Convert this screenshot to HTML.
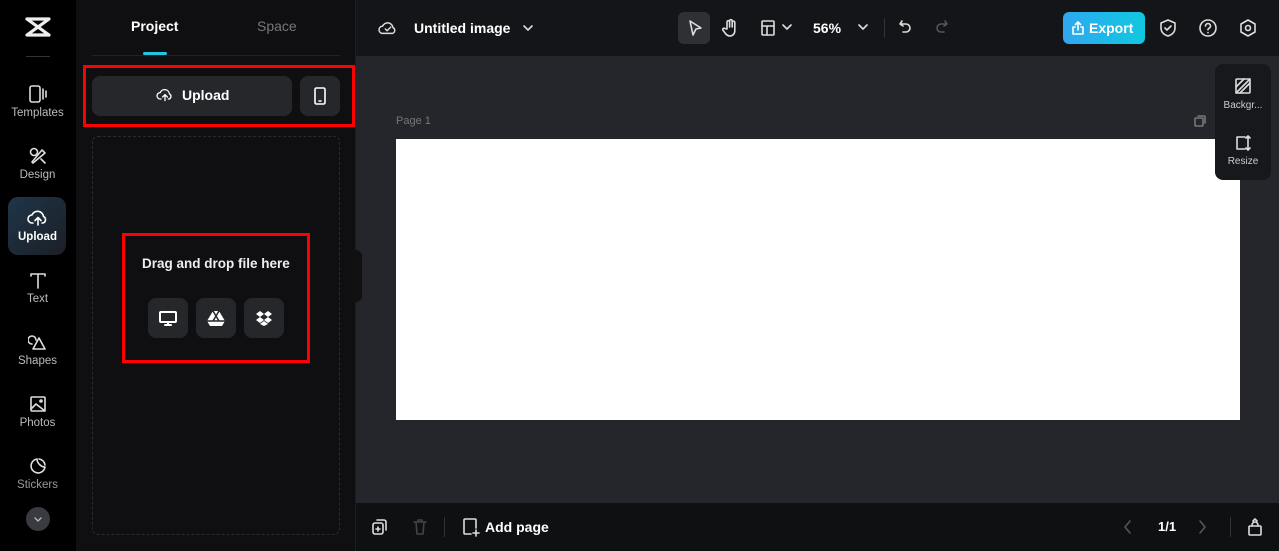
<!DOCTYPE html>
<html><head><meta charset="utf-8"><style>
*{box-sizing:border-box;margin:0;padding:0}
body{width:1279px;height:551px;overflow:hidden;background:#25262b;font-family:"Liberation Sans",sans-serif;position:relative;color:#fff}
.abs{position:absolute}
.rail{left:0;top:0;width:76px;height:551px;background:#000}
.ri{position:absolute;left:0;width:75px;text-align:center;font-size:11.5px;color:#bbb}
.ri svg{display:block;margin:0 auto 3px}
.panel{left:76px;top:0;width:280px;height:551px;background:#0f0f11;border-right:1px solid #1d1e22}
.top{left:356px;top:0;width:923px;height:56px;background:#141518}
.bot{left:356px;top:503px;width:923px;height:48px;background:#0f1012}
.btn{position:absolute;background:#26272b;border-radius:8px}
svg{fill:none;stroke:#ddd;stroke-width:1.6;stroke-linecap:round;stroke-linejoin:round}
</style></head><body>
<div class="abs rail">
 <svg class="abs" style="left:24px;top:16px" width="28" height="22" viewBox="0 0 28 22"><path d="M3 3h22L3 19h22M3 3l22 16" stroke="#eee" stroke-width="3.2"/></svg>
 <div class="abs" style="left:26px;top:56px;width:24px;height:1px;background:#333"></div>
 <div class="ri" style="top:84px"><svg width="20" height="20" viewBox="0 0 20 20"><rect x="2" y="2" width="10" height="16" rx="2"/><path d="M15 5v10M18 7v6"/></svg>Templates</div>
 <div class="ri" style="top:146px"><svg width="20" height="20" viewBox="0 0 20 20"><circle cx="6" cy="6" r="3.5"/><path d="M4 16l10-12 3 3-12 10zM13 13l4 4"/></svg>Design</div>
 <div class="abs" style="left:8px;top:197px;width:58px;height:58px;border-radius:10px;background:linear-gradient(135deg,#1e3548,#1c1f26)"></div>
 <div class="ri" style="top:208px;color:#fff;font-weight:bold"><svg width="22" height="20" viewBox="0 0 22 20" style="stroke:#fff"><path d="M6 15H5a4 4 0 010-8 6 6 0 0111.5 1.5A3.5 3.5 0 0116 15h-1M11 17V10M8 12.5l3-3 3 3"/></svg>Upload</div>
 <div class="ri" style="top:270px"><svg width="20" height="20" viewBox="0 0 20 20"><path d="M3 4h14M10 4v14M3 4v2M17 4v2"/></svg>Text</div>
 <div class="ri" style="top:332px"><svg width="20" height="20" viewBox="0 0 20 20"><path d="M8 8a4 4 0 10-4 4M11 6l6 11H5z"/></svg>Shapes</div>
 <div class="ri" style="top:394px"><svg width="20" height="20" viewBox="0 0 20 20"><rect x="3" y="3" width="14" height="14" rx="1"/><path d="M3 15l5-5 9 7"/><circle cx="13" cy="7" r="1"/></svg>Photos</div>
 <div class="ri" style="top:456px;color:#999"><svg width="20" height="20" viewBox="0 0 20 20"><path d="M17 11A7 7 0 119 3c0 4 4 8 8 8zM11 3a7 7 0 016 6"/></svg>Stickers</div>
 <div class="abs" style="left:26px;top:507px;width:24px;height:24px;border-radius:50%;background:#3a3b40"><svg width="24" height="24" viewBox="0 0 24 24"><path d="M9 11l3 3 3-3" stroke="#bbb" stroke-width="1.3"/></svg></div>
</div>
<div class="abs panel">
 <div class="abs" style="left:55px;top:18px;font-size:14px;font-weight:bold">Project</div>
 <div class="abs" style="left:181px;top:18px;font-size:14px;color:#777">Space</div>
 <div class="abs" style="left:67px;top:52px;width:24px;height:3px;border-radius:2px;background:#1fc6e0"></div>
 <div class="abs" style="left:16px;top:55px;width:248px;height:1px;background:#222"></div>
 <div class="btn" style="left:16px;top:76px;width:200px;height:40px"><div style="position:absolute;left:64px;top:11px;font-size:14px;font-weight:bold;display:flex;align-items:center;gap:8px"><svg width="18" height="16" viewBox="0 0 22 20" style="stroke:#fff"><path d="M6 15H5a4 4 0 010-8 6 6 0 0111.5 1.5A3.5 3.5 0 0116 15h-1M11 17V10M8 12.5l3-3 3 3"/></svg>Upload</div></div>
 <div class="btn" style="left:224px;top:76px;width:40px;height:40px"><svg style="position:absolute;left:12px;top:10px" width="16" height="20" viewBox="0 0 16 20"><rect x="3" y="2" width="10" height="16" rx="1.5" stroke="#fff"/><path d="M7 15h2" stroke="#fff"/></svg></div>
 <div class="abs" style="left:7px;top:65px;width:272px;height:62px;border:3px solid #f00"></div>
 <div class="abs" style="left:16px;top:136px;width:248px;height:399px;border:1px dashed #2a2b2f;border-radius:6px"></div>
 <div class="abs" style="left:66px;top:256px;font-size:13.5px;font-weight:bold;color:#eee">Drag and drop file here</div>
 <div class="btn" style="left:72px;top:298px;width:40px;height:40px"><svg style="position:absolute;left:10px;top:10px" width="20" height="20" viewBox="0 0 20 20"><rect x="2" y="4" width="16" height="10" rx="1" stroke="#fff" stroke-width="2"/><path d="M7 17h6M10 14v3" stroke="#fff" stroke-width="2"/></svg></div>
 <div class="btn" style="left:120px;top:298px;width:40px;height:40px"><svg style="position:absolute;left:10px;top:10px" width="20" height="20" viewBox="0 0 20 20"><path d="M7 3h6l6 10-3 5H4l-3-5z" fill="#fff" stroke="none"/><path d="M7 3l6 10M13 3L7 13M1 13h18" stroke="#26272b" stroke-width="1.5"/></svg></div>
 <div class="btn" style="left:168px;top:298px;width:40px;height:40px"><svg style="position:absolute;left:10px;top:10px" width="20" height="20" viewBox="0 0 20 20" style="stroke:none"><path d="M6 3l4 3-4 3-4-3zM14 3l4 3-4 3-4-3zM6 9l4 3-4 3-4-3zM14 9l4 3-4 3-4-3zM10 13l4 3-4 2-4-2z" fill="#fff" stroke="none"/></svg></div>
 <div class="abs" style="left:46px;top:233px;width:188px;height:130px;border:3px solid #f00"></div>
</div>
<div class="abs" style="left:352px;top:250px;width:10px;height:52px;background:#111;border-radius:0 6px 6px 0"></div>
<div class="abs top">
 <svg class="abs" style="left:22px;top:19px" width="20" height="18" viewBox="0 0 22 20"><path d="M6 16H5a4 4 0 010-8 6 6 0 0111.5 1.5A3.5 3.5 0 0116 16H6M8 11l2 2 4-4"/></svg>
 <div class="abs" style="left:58px;top:20px;font-size:14px;font-weight:bold">Untitled image</div>
 <svg class="abs" style="left:166px;top:22px" width="12" height="12" viewBox="0 0 12 12"><path d="M2 4l4 4 4-4"/></svg>
 <div class="abs" style="left:322px;top:12px;width:32px;height:32px;background:#2f3036;border-radius:6px"><svg style="position:absolute;left:8px;top:7px" width="18" height="18" viewBox="0 0 18 18"><path d="M4 2l11 7-5 1-3 6z"/></svg></div>
 <svg class="abs" style="left:364px;top:18px" width="20" height="20" viewBox="0 0 20 20"><path d="M7 11V4a1.3 1.3 0 012.6 0v5V3a1.3 1.3 0 012.6 0v6V4.5a1.3 1.3 0 012.6 0V13a5 5 0 01-5 5c-2 0-3-1-4-2l-3-4a1.3 1.3 0 012-1.5z"/></svg>
 <svg class="abs" style="left:403px;top:19px" width="18" height="18" viewBox="0 0 18 18"><rect x="3" y="2" width="12" height="14" rx="1"/><path d="M3 7h12M8 7v9"/></svg>
 <svg class="abs" style="left:426px;top:22px" width="10" height="10" viewBox="0 0 10 10"><path d="M1 3l4 4 4-4"/></svg>
 <div class="abs" style="left:457px;top:20px;font-size:14px;font-weight:bold">56%</div>
 <svg class="abs" style="left:502px;top:22px" width="10" height="10" viewBox="0 0 10 10"><path d="M1 3l4 4 4-4"/></svg>
 <div class="abs" style="left:528px;top:18px;width:1px;height:20px;background:#333"></div>
 <svg class="abs" style="left:541px;top:18px" width="18" height="18" viewBox="0 0 18 18"><path d="M5 3L3 6l3 2M3 6h6a4 4 0 010 8H6"/></svg>
 <svg class="abs" style="left:576px;top:18px" width="18" height="18" viewBox="0 0 18 18" style="stroke:#555"><path d="M13 3l2 3-3 2M15 6H9a4 4 0 000 8h3" stroke="#555"/></svg>
 <div class="abs" style="left:707px;top:12px;width:82px;height:32px;border-radius:6px;background:linear-gradient(90deg,#2fa8f0,#10c8e0)"><div style="position:absolute;left:9px;top:8px;font-size:14px;font-weight:bold;display:flex;gap:5px;align-items:center"><svg width="12" height="14" viewBox="0 0 12 14" style="stroke:#fff"><path d="M3 6H1v7h10V6H9M6 9V1M3.5 3.5L6 1l2.5 2.5"/></svg>Export</div></div>
 <svg class="abs" style="left:802px;top:18px" width="20" height="20" viewBox="0 0 20 20"><path d="M10 2l7 3v5c0 4-3 7-7 8-4-1-7-4-7-8V5z M7 10l2 2 4-4"/></svg>
 <svg class="abs" style="left:842px;top:18px" width="20" height="20" viewBox="0 0 20 20"><circle cx="10" cy="10" r="8"/><path d="M7.5 8a2.5 2.5 0 113.5 2.3c-.7.3-1 .8-1 1.5M10 14.5v.2"/></svg>
 <svg class="abs" style="left:882px;top:18px" width="20" height="20" viewBox="0 0 20 20"><path d="M10 2l7 4v8l-7 4-7-4V6z"/><circle cx="10" cy="10" r="2.5"/></svg>
</div>
<div class="abs" style="left:396px;top:115px;font-size:11px;color:#777">Page 1</div>
<svg class="abs" style="left:1193px;top:114px" width="14" height="14" viewBox="0 0 14 14" style="stroke:#777"><rect x="2" y="4" width="8" height="8" rx="1" stroke="#777"/><path d="M5 2h6a1 1 0 011 1v6" stroke="#777"/></svg>
<div class="abs" style="left:396px;top:139px;width:844px;height:281px;background:#fff"></div>
<div class="abs" style="left:1215px;top:64px;width:56px;height:116px;background:#17181c;border-radius:8px">
 <svg style="position:absolute;left:19px;top:13px" width="18" height="18" viewBox="0 0 18 18"><rect x="2" y="2" width="14" height="14" rx="1"/><path d="M2 10l8-8M6 16L16 6M2 16L16 2"/></svg>
 <div style="position:absolute;left:0;width:56px;top:36px;text-align:center;font-size:10px;color:#ccc">Backgr...</div>
 <svg style="position:absolute;left:19px;top:70px" width="18" height="18" viewBox="0 0 18 18"><path d="M3 3h8M3 3v12h8M14 2v14M12 4l2-2 2 2M12 14l2 2 2-2"/></svg>
 <div style="position:absolute;left:0;width:56px;top:92px;text-align:center;font-size:10px;color:#ccc">Resize</div>
</div>
<div class="abs bot">
 <svg class="abs" style="left:15px;top:15px" width="18" height="18" viewBox="0 0 18 18"><rect x="2" y="5" width="10" height="11" rx="2"/><path d="M6 2h7a2 2 0 012 2v8M7 9v4M5 11h4"/></svg>
 <svg class="abs" style="left:55px;top:15px" width="18" height="18" viewBox="0 0 18 18"><path d="M3 4h12M5 4l1 12h6l1-12M7 4V2h4v2" stroke="#444"/></svg>
 <div class="abs" style="left:88px;top:14px;width:1px;height:20px;background:#333"></div>
 <svg class="abs" style="left:105px;top:14px" width="20" height="20" viewBox="0 0 20 20"><path d="M10 17H4a1 1 0 01-1-1V3a1 1 0 011-1h10a1 1 0 011 1v8M15 13v6M12 16h6"/></svg>
 <div class="abs" style="left:129px;top:16px;font-size:14px;font-weight:bold">Add page</div>
 <svg class="abs" style="left:766px;top:16px" width="12" height="16" viewBox="0 0 12 16"><path d="M8 2L3 8l5 6" stroke="#555"/></svg>
 <div class="abs" style="left:802px;top:16px;font-size:13px;font-weight:bold">1/1</div>
 <svg class="abs" style="left:840px;top:16px" width="12" height="16" viewBox="0 0 12 16"><path d="M4 2l5 6-5 6" stroke="#555"/></svg>
 <div class="abs" style="left:874px;top:14px;width:1px;height:20px;background:#333"></div>
 <svg class="abs" style="left:890px;top:14px" width="18" height="20" viewBox="0 0 18 20"><rect x="3" y="9" width="12" height="9" rx="1"/><path d="M6 9V8a3 3 0 016 0v1M7 4l2-2 2 2"/></svg>
</div>
</body></html>
